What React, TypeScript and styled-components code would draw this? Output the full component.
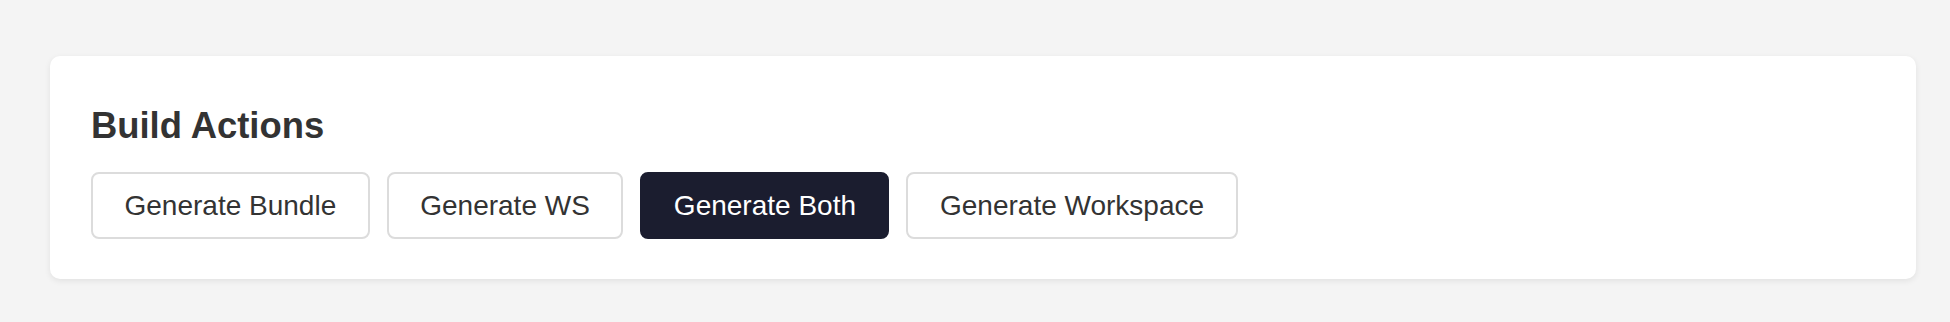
import { createGlobalStyle, styled } from "styled-components";

const GlobalStyle = createGlobalStyle`
  html, body {
    margin: 0;
    padding: 0;
    background: #f4f4f4;
    font-family: "Liberation Sans", Arial, sans-serif;
  }
`;

interface ActionButtonProps {
  $primary?: boolean;
}

const actions = [
  { label: "Generate Bundle" },
  { label: "Generate WS" },
  { label: "Generate Both", primary: true },
  { label: "Generate Workspace" },
];

const App = () => {
  return (
    <>
      <GlobalStyle />
      <Page>
        <Card>
          <Title>Build Actions</Title>
          <ButtonRow>
            {actions.map((action) => (
              <ActionButton key={action.label} $primary={action.primary}>
                {action.label}
              </ActionButton>
            ))}
          </ButtonRow>
        </Card>
      </Page>
    </>
  );
};

export default App;

const Page = styled.main`
  padding: 56px 34px 42px 50px;
`;

const Card = styled.section`
  background: #ffffff;
  border-radius: 10px;
  box-shadow: 0 2px 6px rgba(0, 0, 0, 0.08);
  padding: 49px 40px 40px 41px;
`;

const Title = styled.h2`
  margin: 0 0 26px;
  font-size: 36.4px;
  font-weight: 700;
  line-height: 41px;
  color: #333333;
`;

const ButtonRow = styled.div`
  display: flex;
  gap: 17px;
`;

const ActionButton = styled.button<ActionButtonProps>`
  height: 67px;
  padding: 0 31.5px;
  border: 2px solid ${(p) => (p.$primary ? "#1b1d2f" : "#dcdcdc")};
  border-radius: 8px;
  background: ${(p) => (p.$primary ? "#1b1d2f" : "#ffffff")};
  color: ${(p) => (p.$primary ? "#ffffff" : "#333333")};
  font-family: "Liberation Sans", Arial, sans-serif;
  font-size: 28px;
  cursor: pointer;
`;
